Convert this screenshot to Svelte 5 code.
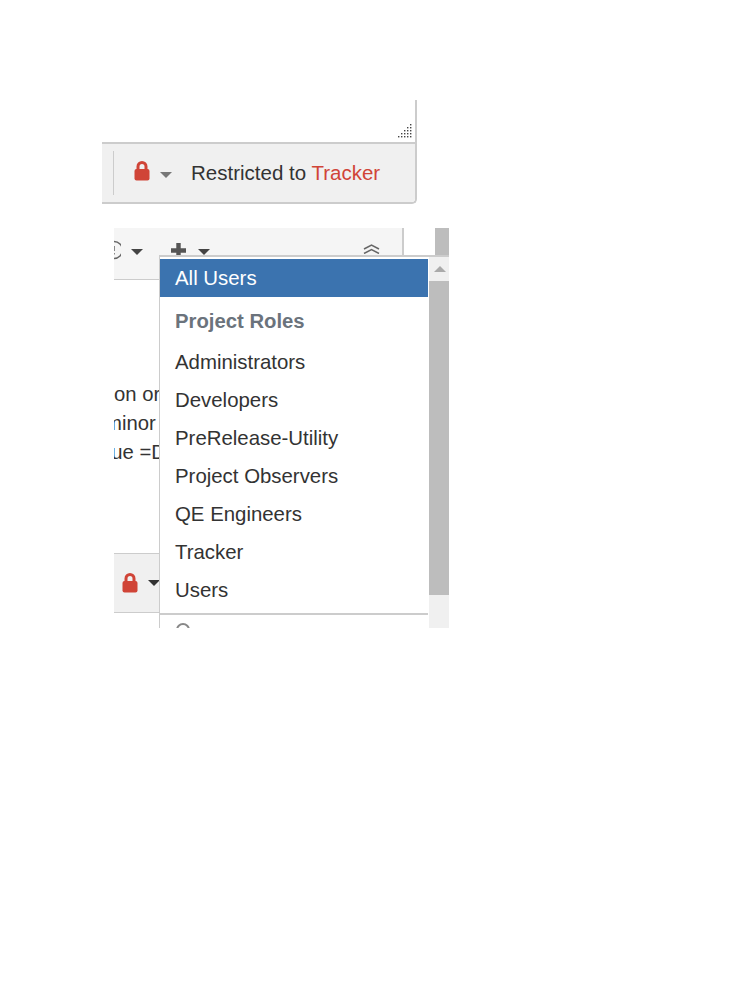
<script>
  const roles = ['Administrators', 'Developers', 'PreRelease-Utility', 'Project Observers', 'QE Engineers', 'Tracker', 'Users'];
</script>

<main class="page">
  <section class="editor">
    <div class="editor-body">
      <svg class="grip" width="14" height="14" viewBox="0 0 14 14">
        {#each [[12,0],[12,3],[9,3],[12,6],[9,6],[6,6],[12,9],[9,9],[6,9],[3,9],[12,12],[9,12],[6,12],[3,12],[0,12]] as [x, y]}
          <rect {x} {y} width="1.4" height="1.4" fill="#444" />
        {/each}
      </svg>
    </div>
    <div class="editor-foot">
      <span class="sep"></span>
      <svg class="lock" width="16" height="20" viewBox="0 0 16 20"><path d="M4 9V5.500a4 4 0 0 1 8 0V9" fill="none" stroke="#d04437" stroke-width="3"/><rect x="0.500" y="8" width="15" height="11.500" rx="2" fill="#d04437"/></svg>
      <span class="caret grey"></span>
      <span class="restricted">Restricted to <em>Tracker</em></span>
    </div>
  </section>

  <section class="second">
    <div class="scroll-strip"></div>
    <div class="toolbar">
      <svg class="smile" width="7" height="20" viewBox="0 0 7 20"><path d="M0 1.500a8.500 8.500 0 0 1 0 17" fill="none" stroke="#666" stroke-width="1.500"/><path d="M0 6v5M0 13v1.500" stroke="#666" stroke-width="1.500"/></svg>
      <span class="caret dark first"></span>
      <svg class="plus" width="17" height="17" viewBox="0 0 17 17"><path d="M8.500 1v15M1 8.500h15" stroke="#555" stroke-width="4.400"/></svg>
      <span class="caret dark second-caret"></span>
      <svg class="collapse" width="17" height="10" viewBox="0 0 17 10"><path d="M1 5l7.500-4 7.500 4M1 9.500l7.500-4 7.500 4" fill="none" stroke="#666" stroke-width="1.500"/></svg>
    </div>
    <div class="para">
      <p>on or</p>
      <p class="tight">minor</p>
      <p class="tight2">due =D</p>
    </div>
    <div class="foot2">
      <svg width="16" height="20" viewBox="0 0 16 20"><path d="M4 9V5.500a4 4 0 0 1 8 0V9" fill="none" stroke="#d04437" stroke-width="3"/><rect x="0.500" y="8" width="15" height="11.500" rx="2" fill="#d04437"/></svg>
      <span class="caret black"></span>
    </div>

    <div class="menu">
      <div class="list">
        <div class="item selected">All Users</div>
        <div class="heading">Project Roles</div>
        {#each roles as role}
          <div class="item">{role}</div>
        {/each}
        <div class="divider"></div>
        <svg class="partial" width="16" height="6" viewBox="0 0 16 6"><path d="M2 7a6 6 0 0 1 12 0" fill="none" stroke="#888" stroke-width="2"/></svg>
      </div>
      <div class="bar">
        <div class="arrow"><span></span></div>
        <div class="thumb"></div>
      </div>
    </div>
  </section>
</main>

<style>
  :global(body) { margin: 0; background: #fff; font-family: "Liberation Sans", Arial, sans-serif; color: #333; }
  .page { width: 749px; height: 998px; padding: 100px 0 0 102px; box-sizing: border-box; overflow: hidden; }
  .editor { width: 315px; box-sizing: border-box; border-right: 2px solid #ccc; border-bottom: 2px solid #ccc; border-bottom-right-radius: 5px; }
  .editor-body { height: 42px; border-bottom: 2px solid #ccc; display: flex; justify-content: flex-end; align-items: flex-end; }
  .grip { margin: 0 3px 4px 0; }
  .editor-foot { height: 58px; background: #f0f0f0; display: flex; align-items: center; border-bottom-right-radius: 4px; }
  .sep { width: 1px; height: 44px; background: #ccc; margin-left: 11px; }
  .lock { margin-left: 20px; margin-bottom: 4px; }
  .caret { width: 0; height: 0; border-left: 6px solid transparent; border-right: 6px solid transparent; border-top: 6px solid #777; }
  .caret.grey { margin-left: 10px; margin-top: 3px; }
  .restricted { font-size: 20.5px; margin-left: 19px; color: #333; }
  em { font-style: normal; color: #d04437; }

  .second { position: relative; margin: 24px 0 0 12px; width: 335px; height: 400px; overflow: hidden; }
  .scroll-strip { position: absolute; left: 321px; top: 0; width: 14px; height: 60px; background: #bdbdbd; }
  .toolbar { width: 290px; height: 52px; background: #f5f5f5; border-right: 2px solid #ccc; border-bottom: 1px solid #ccc; box-sizing: border-box; display: flex; align-items: center; padding-bottom: 7px; }
  .caret.dark { border-top-color: #444; margin-top: 3px; }
  .first { margin-left: 10px; }
  .plus { margin-left: 27px; }
  .second-caret { margin-left: 11px; }
  .collapse { margin-left: auto; margin-right: 22px; margin-bottom: 2px; }
  .para { margin-top: 100px; height: 173px; font-size: 20.3px; }
  .para p { margin: 0; height: 29px; line-height: 29px; white-space: nowrap; }
  .para .tight { margin-left: -9px; }
  .para .tight2 { margin-left: -14px; }
  .foot2 { height: 60px; width: 60px; background: #f0f0f0; box-sizing: border-box; border-top: 1px solid #ccc; border-bottom: 1px solid #ccc; display: flex; align-items: center; padding-left: 8px; }
  .caret.black { border-top-color: #333; margin-left: 10px; }

  .menu { position: absolute; left: 45px; top: 27px; width: 290px; height: 380px; background: #fff; border-left: 1px solid #ccc; border-top: 2px solid #ccc; box-sizing: border-box; display: flex; }
  .list { width: 268px; padding-top: 2px; }
  .item { height: 38px; line-height: 38px; padding-left: 15px; font-size: 20.4px; color: #333; }
  .item.selected { background: #3b73af; color: #fff; }
  .heading { height: 46px; line-height: 49px; padding-left: 15px; font-size: 20.3px; font-weight: 700; color: #6b737c; }
  .divider { height: 2px; background: #ccc; margin-top: 4px; }
  .partial { display: block; margin: 8px 0 0 15px; }
  .bar { width: 20px; margin-left: 1px; background: #f0f0f0; display: flex; flex-direction: column; }
  .arrow { height: 24px; display: flex; justify-content: center; padding: 9px 0 0 2px; box-sizing: border-box; }
  .arrow span { width: 0; height: 0; border-left: 6px solid transparent; border-right: 6px solid transparent; border-bottom: 6px solid #aaa; }
  .thumb { height: 314px; background: #bdbdbd; }
</style>
